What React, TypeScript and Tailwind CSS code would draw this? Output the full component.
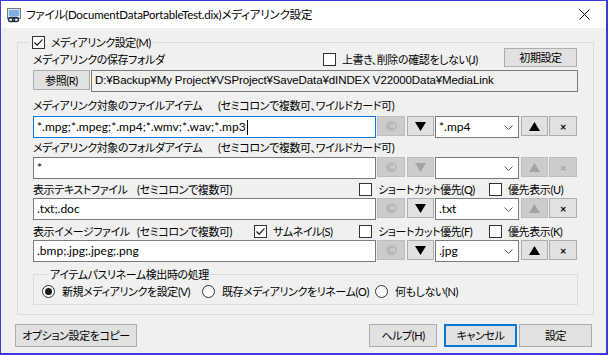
import type { ReactNode } from 'react';

function Btn({ children, className = '', disabled = false, focused = false }: { children?: ReactNode; className?: string; disabled?: boolean; focused?: boolean }) {
  const look = disabled
    ? 'border border-[#bfbfbf] bg-[#cccccc] text-[#a3a3a3]'
    : focused
      ? 'border-2 border-[#0078d7] bg-[#e1e1e1] text-black'
      : 'border border-[#adadad] bg-[#e1e1e1] text-black';
  return <div className={`box-border flex shrink-0 items-center justify-center ${look} ${className}`}>{children}</div>;
}

function Check({ checked = false, children, className = '' }: { checked?: boolean; children: ReactNode; className?: string }) {
  return (
    <div className={`flex shrink-0 items-center ${className}`}>
      <span className="box-border grid size-[13px] shrink-0 place-items-center border border-[#333333] bg-white">
        {checked && (
          <svg width="11" height="11" viewBox="0 0 11 11">
            <path d="M1.5 5.5 L4.2 8.2 L9.5 2.5" fill="none" stroke="#000" strokeWidth="1.1" />
          </svg>
        )}
      </span>
      <span className="ml-[6px]">{children}</span>
    </div>
  );
}

function Radio({ checked = false, children, className = '' }: { checked?: boolean; children: ReactNode; className?: string }) {
  return (
    <div className={`flex shrink-0 items-center ${className}`}>
      <span className="box-border grid size-[13px] shrink-0 place-items-center rounded-full border border-[#333333] bg-white">
        {checked && <span className="size-[7px] rounded-full bg-[#1a1a1a]" />}
      </span>
      <span className="ml-[7px]">{children}</span>
    </div>
  );
}

function Tri({ up = false, color }: { up?: boolean; color: string }) {
  return (
    <svg width="11" height="9" viewBox="0 0 11 9">
      <polygon points={up ? '0,9 11,9 5.5,0' : '0,0 11,0 5.5,9'} fill={color} />
    </svg>
  );
}

function Chevron() {
  return (
    <svg width="9" height="5" viewBox="0 0 9 5">
      <path d="M0.5 0.5 L4.5 4.5 L8.5 0.5" fill="none" stroke="#555" strokeWidth="1" />
    </svg>
  );
}

function ItemRow({ value, focused = false, copy = false, down = false, ext = '', up = false, del = false }: {
  value: string;
  focused?: boolean;
  copy?: boolean;
  down?: boolean;
  ext?: string;
  up?: boolean;
  del?: boolean;
}) {
  return (
    <div className="flex h-[22px] items-start">
      <div className={`box-border flex h-[22px] w-[343px] shrink-0 items-center border bg-white px-[3px] text-[12px] tracking-normal ${focused ? 'border-[#0078d7]' : 'border-[#7a7a7a]'}`}>
        {value}
        {focused && <span className="ml-[1px] h-[15px] w-[1px] bg-black" />}
      </div>
      <Btn disabled={!copy} className="ml-[1px] h-[20px] w-[28px] text-[14px]">©</Btn>
      <Btn disabled={!down} className="ml-[2px] h-[20px] w-[27px]">
        <Tri color={down ? '#000' : '#a3a3a3'} />
      </Btn>
      <div className="box-border ml-[1px] flex h-[22px] w-[84px] shrink-0 items-center justify-between border border-[#7a7a7a] bg-white pl-[3px] pr-[5px] text-[12px] tracking-normal">
        <span>{ext}</span>
        <Chevron />
      </div>
      <Btn disabled={!up} className="ml-[2px] h-[20px] w-[27px]">
        <Tri up color={up ? '#000' : '#a3a3a3'} />
      </Btn>
      <Btn disabled={!del} className="ml-[1px] h-[20px] w-[28px] text-[11px] font-bold">×</Btn>
    </div>
  );
}

function AppIcon() {
  return (
    <svg width="16" height="16" viewBox="0 0 16 16">
      <rect x="1.5" y="1.5" width="13" height="10" fill="#dfe4ea" stroke="#6d7c8c" />
      <rect x="3" y="3" width="10" height="6" fill="#7fb0de" />
      <rect x="2.5" y="10.5" width="6" height="4" rx="2" fill="none" stroke="#1d2b4a" strokeWidth="1.4" />
      <rect x="6.5" y="10.5" width="6" height="4" rx="2" fill="none" stroke="#1d2b4a" strokeWidth="1.4" />
    </svg>
  );
}

export default function App() {
  return (
    <div className="box-border flex h-[355px] w-[608px] flex-col whitespace-nowrap border-t border-r-2 border-b-2 border-l border-[#3b3bd9] bg-[#f0f0f0] font-['Lato','Noto_Sans_CJK_JP',sans-serif] text-[11px] leading-none tracking-[-0.4px] text-black [font-feature-settings:'palt']">
      <div className="flex h-[27px] shrink-0 items-center bg-white">
        <span className="ml-[5px]">
          <AppIcon />
        </span>
        <span className="ml-[4px] text-[11.5px] tracking-[-0.2px]">ファイル(DocumentDataPortableTest.dix)メディアリンク設定</span>
        <svg className="ml-auto mr-[16px]" width="11" height="11" viewBox="0 0 11 11">
          <path d="M0.5 0.5 L10.5 10.5 M10.5 0.5 L0.5 10.5" stroke="#000" strokeWidth="1" />
        </svg>
      </div>

      <fieldset className="box-border ml-[16px] mt-[7px] h-[280px] w-[576px] border border-[#dcdcdc] px-[15px]">
        <legend className="-ml-[3px] flex h-[14px] items-center px-[2px]">
          <Check checked>メディアリンク設定(M)</Check>
        </legend>

        <div className="-mt-[2px] flex h-[20px] items-center">
          <span className="mt-[4px] w-[290px] shrink-0">メディアリンクの保存フォルダ</span>
          <Check className="mt-[4px] w-[181px]">上書き、削除の確認をしない(J)</Check>
          <Btn className="h-[19px] w-[73px]">初期設定</Btn>
        </div>

        <div className="mt-[3px] flex h-[22px] items-start">
          <Btn className="h-[20px] w-[57px]">参照(R)</Btn>
          <div className="box-border ml-[1px] flex h-[22px] flex-1 items-center border border-[#7a7a7a] px-[3px]">
            <span className="font-['Liberation_Sans',sans-serif] text-[11.5px] tracking-[-0.1px]">D:¥Backup¥My Project¥VSProject¥SaveData¥dINDEX V22000Data¥MediaLink</span>
          </div>
        </div>

        <div className="mt-[4px] flex h-[18px] items-center">
          <span className="w-[185px] shrink-0">メディアリンク対象のファイルアイテム</span>
          <span>(セミコロンで複数可、ワイルドカード可)</span>
        </div>
        <div className="mt-[2px]">
          <ItemRow value="*.mpg;*.mpeg;*.mp4;*.wmv;*.wav;*.mp3" focused down ext="*.mp4" up del />
        </div>

        <div className="flex h-[18px] items-center">
          <span className="w-[185px] shrink-0">メディアリンク対象のフォルダアイテム</span>
          <span>(セミコロンで複数可、ワイルドカード可)</span>
        </div>
        <div className="mt-[1px]">
          <ItemRow value="*" />
        </div>

        <div className="mt-[1px] flex h-[18px] items-center">
          <span className="w-[104px] shrink-0">表示テキストファイル</span>
          <span className="w-[222px] shrink-0">(セミコロンで複数可)</span>
          <Check className="w-[130px]">ショートカット優先(Q)</Check>
          <Check>優先表示(U)</Check>
        </div>
        <ItemRow value=".txt;.doc" down ext=".txt" del />

        <div className="mt-[2px] flex h-[18px] items-center">
          <span className="w-[104px] shrink-0">表示イメージファイル</span>
          <span className="w-[117px] shrink-0">(セミコロンで複数可)</span>
          <Check checked className="w-[105px]">サムネイル(S)</Check>
          <Check className="w-[130px]">ショートカット優先(F)</Check>
          <Check>優先表示(K)</Check>
        </div>
        <ItemRow value=".bmp;.jpg;.jpeg;.png" down ext=".jpg" up del />

        <fieldset className="box-border mt-[5px] h-[38px] w-[545px] border border-[#dcdcdc] pl-[8px]">
          <legend className="ml-[7px] flex h-[14px] items-center px-[1px]">アイテムパスリネーム検出時の処理</legend>
          <div className="mt-[4px] flex items-center">
            <Radio checked className="w-[160px]">新規メディアリンクを設定(V)</Radio>
            <Radio className="w-[173px]">既存メディアリンクをリネーム(O)</Radio>
            <Radio>何もしない(N)</Radio>
          </div>
        </fieldset>
      </fieldset>

      <div className="mt-[9px] flex h-[23px] items-center pl-[14px]">
        <Btn className="h-[23px] w-[122px]">オプション設定をコピー</Btn>
        <Btn className="ml-auto h-[23px] w-[68px]">ヘルプ(H)</Btn>
        <Btn focused className="ml-[7px] h-[23px] w-[73px]">キャンセル</Btn>
        <Btn className="ml-[2px] mr-[14px] h-[23px] w-[73px]">設定</Btn>
      </div>
    </div>
  );
}
